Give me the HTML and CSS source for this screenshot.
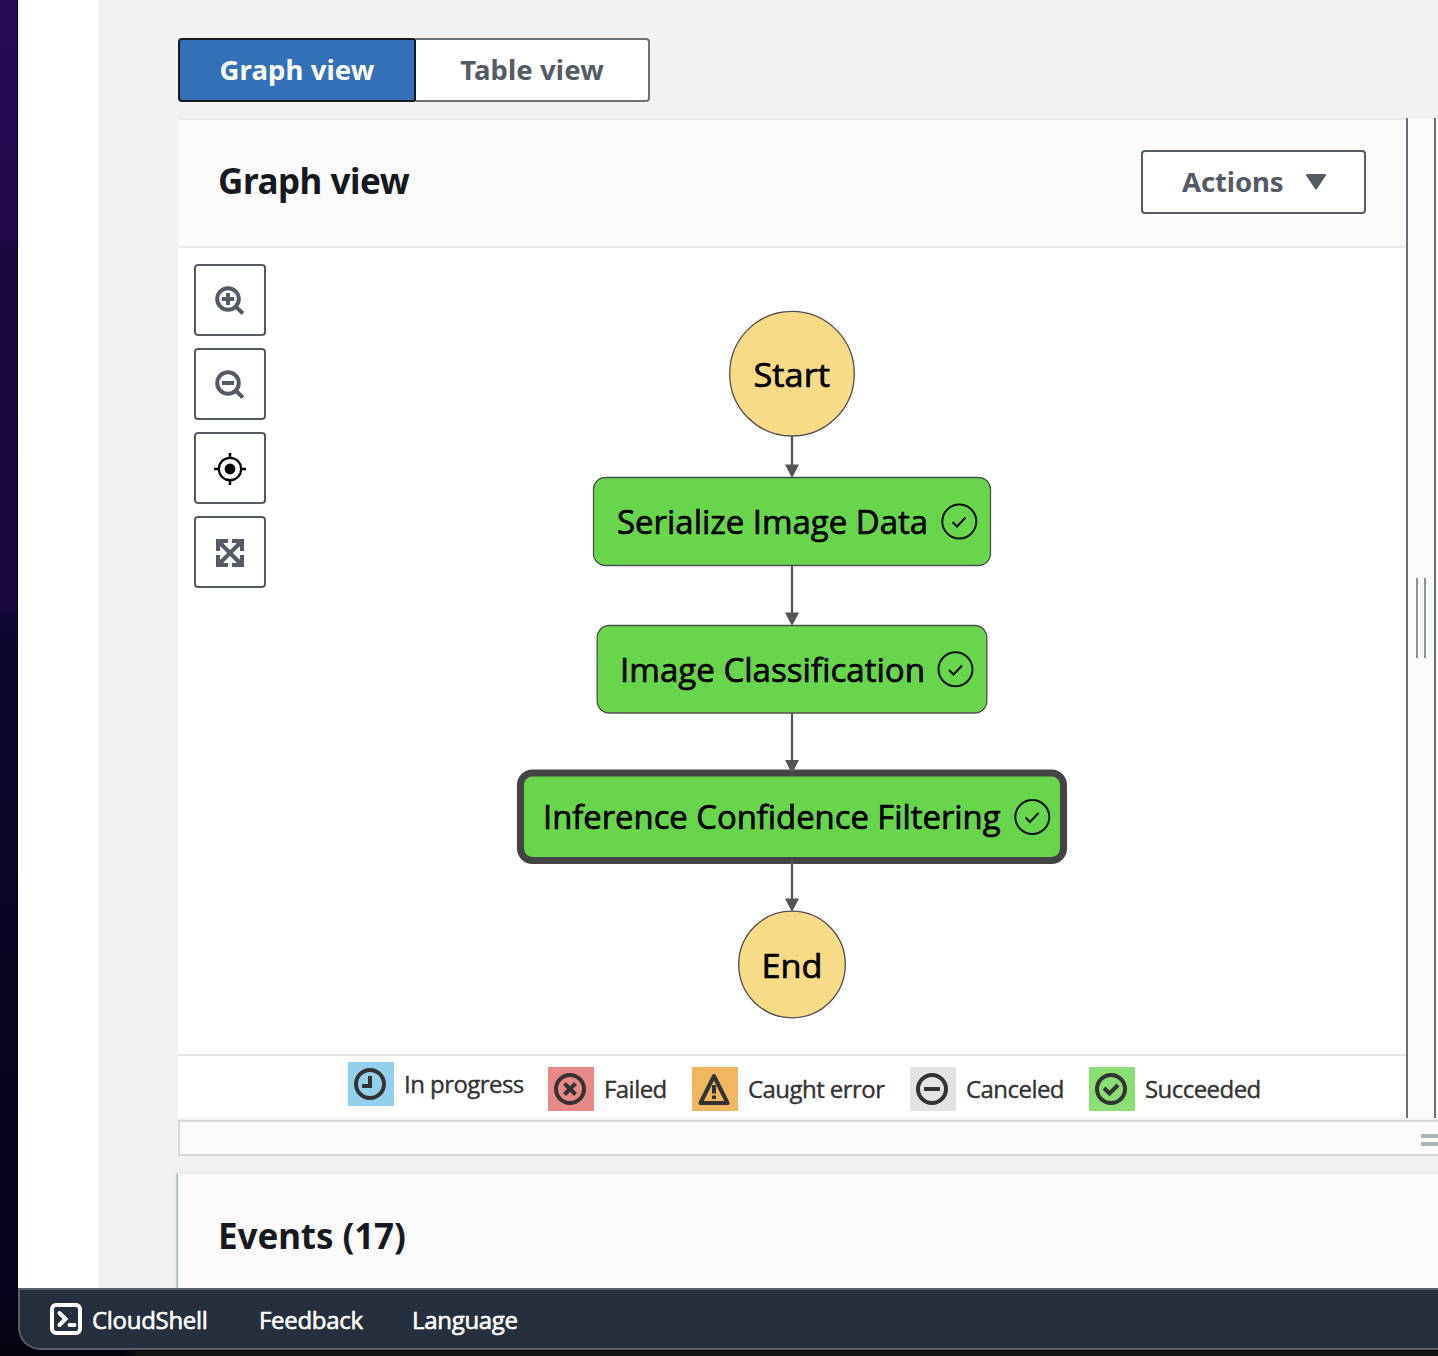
FILE: index.html
```html
<!DOCTYPE html>
<html lang="en">
<head>
<meta charset="utf-8">
<title>Step Functions - Graph view</title>
<link rel="stylesheet" href="styles.css">
</head>
<body>
<div class="window">
  <div class="workspace">
    <aside class="sidebar"></aside>
    <main class="content">
      <div class="segmented">
        <button class="segment segment-active"><span>Graph view</span></button>
        <button class="segment"><span>Table view</span></button>
      </div>

      <div class="split">
        <section class="panel">
          <header class="panel-header">
            <h2 class="title title-graph">Graph view</h2>
            <button class="actions"><span>Actions</span>
              <svg width="22" height="18" viewBox="0 0 22 18"><path d="M2 2H20L11 15.500Z" fill="#545b64" stroke="#545b64" stroke-width="2" stroke-linejoin="round"/></svg>
            </button>
          </header>
          <div class="canvas">
            <div class="tools">
              <button class="tool"><svg width="32" height="32" viewBox="0 0 32 32" fill="none" stroke="#545b64" stroke-width="4"><circle cx="14" cy="15" r="10.800"/><path d="M21.500 22.500L29 29.500M8 15H20M14 9V21"/></svg></button>
              <button class="tool"><svg width="32" height="32" viewBox="0 0 32 32" fill="none" stroke="#545b64" stroke-width="4"><circle cx="14" cy="15" r="10.800"/><path d="M21.500 22.500L29 29.500M8 15H20"/></svg></button>
              <button class="tool"><svg width="32" height="34" viewBox="0 0 32 34" fill="none" stroke="#000" stroke-width="2.200"><circle cx="16" cy="18" r="11.200"/><path d="M16 2V8M16 28V34M0 18H6M26 18H32" stroke-width="2.500"/><circle cx="16" cy="18" r="5.400" fill="#000" stroke="none"/></svg></button>
              <button class="tool"><svg width="28" height="30" viewBox="0 0 28 30"><path d="M3 5L25 27M25 5L3 27" stroke="#545b64" stroke-width="4"/><path d="M0 2H12V6H8L4 10V14H0ZM28 2H16V6H20L24 10V14H28ZM0 30H12V26H8L4 22V18H0ZM28 30H16V26H20L24 22V18H28Z" fill="#545b64"/></svg></button>
            </div>
            <svg class="graph" width="560" height="720" viewBox="512 304 560 720">
              <g stroke="#4d4d4d" stroke-width="1.300">
                <circle cx="792" cy="373.700" r="62.300" fill="#f7db87"/>
                <rect x="593.500" y="477.500" width="397" height="88" rx="12" fill="#69d54d"/>
                <rect x="597.200" y="625.500" width="389.600" height="87.500" rx="12" fill="#69d54d"/>
                <rect x="520.500" y="773" width="543" height="87.500" rx="12" fill="#69d54d" stroke="#444" stroke-width="7"/>
                <circle cx="792" cy="964.500" r="53.300" fill="#f7db87"/>
              </g>
              <g class="edges">
                <path d="M792 436V466M792 566V614M792 713V762M792 860V900" fill="none" stroke="#545454" stroke-width="2.200"/>
                <path d="M785 464.500H799L792 478ZM785 612.500H799L792 626ZM785 760H799L792 773.500ZM785 898.500H799L792 912Z" fill="#545454"/>
              </g>
              <g class="labels">
                <text x="753.500" y="387" textLength="76.500" lengthAdjust="spacingAndGlyphs">Start</text>
                <text x="617" y="534" textLength="311" lengthAdjust="spacingAndGlyphs">Serialize Image Data</text>
                <text x="620" y="682" textLength="305" lengthAdjust="spacingAndGlyphs">Image Classification</text>
                <text x="543" y="829" textLength="457.500" lengthAdjust="spacingAndGlyphs">Inference Confidence Filtering</text>
                <text x="761.500" y="978" textLength="61" lengthAdjust="spacingAndGlyphs">End</text>
              </g>
              <g fill="none" stroke="#061404" stroke-width="2">
                <circle cx="959.300" cy="521.500" r="17"/><path d="M952.500 522L957 526.500L965.500 517.500"/>
                <circle cx="955.500" cy="669.200" r="17"/><path d="M949 670L953.500 674.500L962 665.500"/>
                <circle cx="1032.300" cy="817" r="17"/><path d="M1025.500 817.500L1030 822L1038.500 813"/>
              </g>
            </svg>
          </div>
          <footer class="legend">
            <div class="legend-item legend-raised"><i class="swatch progress"><svg width="32" height="32" viewBox="0 0 32 32"><circle cx="16" cy="16" r="14"/><path d="M16 8V18H8"/></svg></i><span class="t-progress">In progress</span></div>
            <div class="legend-item"><i class="swatch failed"><svg width="32" height="32" viewBox="0 0 32 32"><circle cx="16" cy="16" r="14"/><path d="M10.500 10.500L21.500 21.500M21.500 10.500L10.500 21.500"/></svg></i><span class="t-failed">Failed</span></div>
            <div class="legend-item"><i class="swatch caught"><svg width="32" height="32" viewBox="0 0 32 32"><path d="M16 3L29.500 30H2.500Z" stroke-linejoin="round"/><path d="M16 12V20.500M16 22.500V26"/></svg></i><span class="t-caught">Caught error</span></div>
            <div class="legend-item"><i class="swatch canceled"><svg width="32" height="32" viewBox="0 0 32 32"><circle cx="16" cy="16" r="14"/><path d="M8 16H24"/></svg></i><span class="t-canceled">Canceled</span></div>
            <div class="legend-item"><i class="swatch succeeded"><svg width="32" height="32" viewBox="0 0 32 32"><circle cx="16" cy="16" r="14"/><path d="M9 15L14.500 20.500L23 12"/></svg></i><span class="t-succeeded">Succeeded</span></div>
          </footer>
        </section>
        <div class="splitter"><i></i><i></i></div>
        <div class="side"></div>
      </div>

      <div class="drag-bar"><span class="drag-handle"></span></div>
      <section class="events"><h2 class="title title-events">Events (17)</h2></section>
    </main>
  </div>
  <nav class="bottom-nav">
    <a class="shell"><svg width="32" height="32" viewBox="0 0 32 32" fill="none" stroke="#fff" stroke-width="4"><rect x="2" y="2" width="28" height="28" rx="4"/><path d="M9.500 10L15.500 16L9.500 22M19.500 22H24.500" stroke-linecap="round"/></svg><span>CloudShell</span></a>
    <a class="feedback">Feedback</a>
    <a class="language">Language</a>
  </nav>
</div>
</body>
</html>
```
FILE: styles.css
```css
* { box-sizing: border-box; }

body {
  margin: 0;
  width: 1438px;
  height: 1356px;
  overflow: hidden;
  padding-left: 18px;
  font-family: "Noto Sans", "Open Sans", sans-serif;
  color: #16191f;
  background:
    linear-gradient(90deg, transparent 17px, #05010d 17px, #05010d 18px, transparent 18px),
    linear-gradient(90deg, transparent 125px, #151212 140px) 0 1351px / 100% 5px no-repeat,
    linear-gradient(180deg, #290b57 0, #23084b 240px, #17083c 250px, #190740 600px, #100631 620px, #0b0525 900px, #06021b 1300px, #05020f 1356px);
}

button { font: inherit; margin: 0; padding: 0; cursor: pointer; }
svg { display: block; flex: none; }

.window {
  display: flex;
  flex-direction: column;
  height: 1350px;
  border-bottom-left-radius: 22px;
  overflow: hidden;
}
.workspace { display: flex; height: 1288px; }
.sidebar { flex: 0 0 80px; background: #fff; }
.content {
  flex: 1;
  min-width: 0;
  padding: 38px 0 0 80px;
  background: #f2f2f2;
  overflow: hidden;
}

.segmented { display: flex; height: 64px; width: 472px; }
.segment {
  flex: 1;
  padding-bottom: 2px;
  border: 2px solid #687078;
  border-left: 0;
  border-radius: 0 4px 4px 0;
  background: #fff;
  color: #545b64;
  font-size: 27.5px;
  font-weight: 700;
  letter-spacing: 0.1px;
}
.segment-active {
  flex: 0 0 238px;
  border: 2px solid #16191f;
  border-radius: 4px 2px 2px 4px;
  background: #3470b7;
  color: #fff;
}

.split { display: flex; height: 1000px; margin-top: 16px; }
.panel { display: flex; flex-direction: column; width: 1228px; background: #fff; }
.panel-header {
  display: flex;
  align-items: center;
  justify-content: space-between;
  height: 130px;
  padding: 0 40px 2px;
  border-top: 2px solid #ebebeb;
  border-bottom: 2px solid #eaeaea;
  background: #fafafa;
}
.title { margin: 0; font-size: 35px; line-height: 48px; font-weight: 700; letter-spacing: -0.45px; }
.title-graph { padding-bottom: 2px; }
.title-events { letter-spacing: -0.1px; }
.actions {
  display: flex;
  align-items: center;
  justify-content: space-between;
  width: 225px;
  height: 64px;
  padding: 0 37px 0 39px;
  border: 2px solid #545b64;
  border-radius: 4px;
  background: #fff;
  color: #545b64;
  font-size: 27.5px;
  font-weight: 700;
  letter-spacing: -0.1px;
}
.actions span { padding-bottom: 2px; }

.canvas { display: flex; flex: 1; padding: 16px; }
.tools { display: flex; flex-direction: column; gap: 12px; width: 72px; }
.tool {
  display: flex;
  align-items: center;
  justify-content: center;
  height: 72px;
  border: 2px solid #545b64;
  border-radius: 4px;
  background: #fff;
}
.graph { margin: 40px 0 0 246px; }
.labels {
  font-family: "Open Sans", sans-serif;
  font-size: 33px;
  fill: #000;
  stroke: #000;
  stroke-width: 0.7px;
}

.legend {
  display: flex;
  gap: 24px;
  height: 64px;
  padding: 11px 0 0 170px;
  border-top: 2px solid #e3e5e6;
  color: #333;
  font-family: "Open Sans", sans-serif;
  font-size: 24px;
  letter-spacing: -0.55px;
  line-height: 44px;
  -webkit-text-stroke: 0.4px #333;
}
.legend-item { display: flex; gap: 10px; height: 44px; white-space: nowrap; }
.legend-raised { margin-top: -5px; }
.swatch { display: flex; width: 46px; height: 44px; padding: 6px 0 0 6px; }
.swatch svg { fill: none; stroke: #333; stroke-width: 4; }
.progress { background: #92d0eb; }
.failed { background: #e78986; }
.caught { background: #f1b660; }
.canceled { background: #e3e3e3; }
.succeeded { background: #89de74; }
.t-progress { width: 120px; }
.t-failed { width: 64px; }
.t-caught { width: 138px; }
.t-canceled { width: 99px; }
.t-succeeded { width: 115px; }

.splitter {
  display: flex;
  align-items: center;
  justify-content: center;
  gap: 6px;
  width: 30px;
  border: 2px solid #687078;
  border-width: 0 2px;
  background: #fafafa;
}
.splitter i { width: 2px; height: 80px; background: #879596; }
.side { flex: 1; background: #fafafa; }

.drag-bar {
  display: flex;
  align-items: center;
  justify-content: flex-end;
  height: 36px;
  margin-top: 2px;
  border: 2px solid #d5dadb;
  border-right: 0;
  background: #fafafa;
}
.drag-handle { width: 17px; height: 12px; margin-top: 4px; border: 4px solid #aab7b8; border-width: 4px 0; }

.events {
  height: 130px;
  margin-top: 16px;
  padding: 38px 40px 0;
  border-top: 2px solid #ebebeb;
  background: #fafafa;
  box-shadow: -1px 2px 2px rgba(0, 28, 36, 0.5);
}

.bottom-nav {
  display: flex;
  align-items: center;
  height: 62px;
  padding: 0 0 0 30px;
  border: 2px solid #59606a;
  border-right: 0;
  border-bottom-left-radius: 22px;
  background: #252f3e;
  color: #fff;
  font-family: "Open Sans", sans-serif;
  font-size: 24px;
  letter-spacing: -0.3px;
  -webkit-text-stroke: 0.6px #fff;
}
.shell { display: flex; align-items: center; gap: 10px; width: 209px; }
.feedback { width: 153px; }
```
